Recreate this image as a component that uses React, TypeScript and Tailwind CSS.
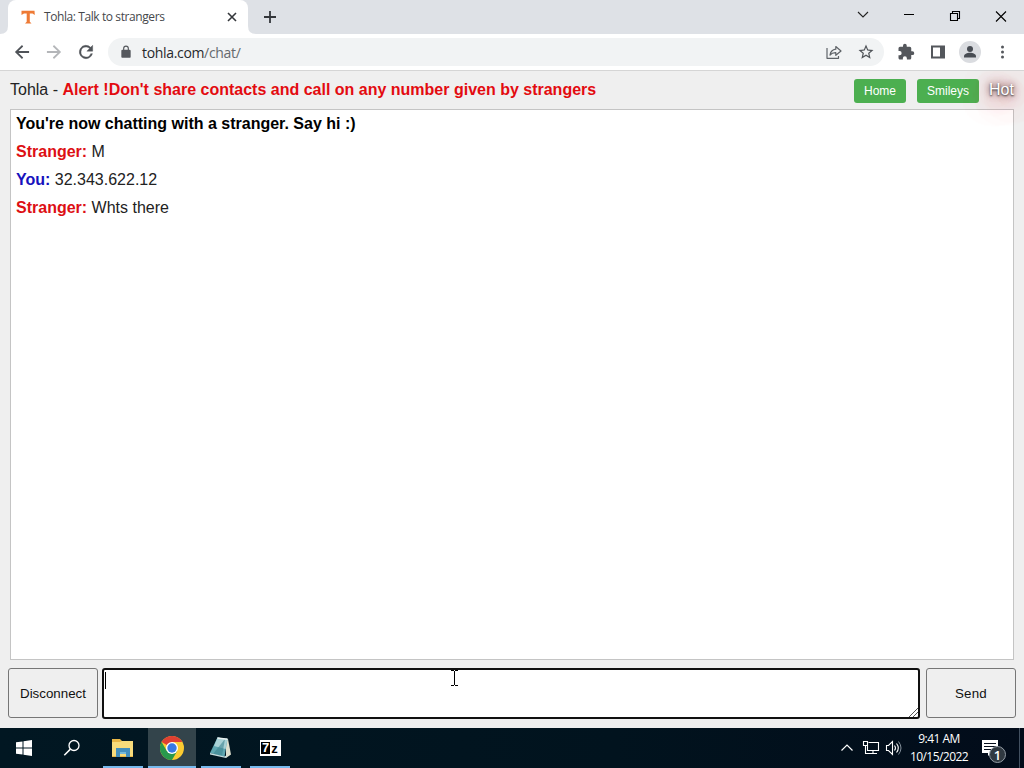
import type { ReactNode } from 'react';

const messages = [
  { from: 'Stranger', text: 'M' },
  { from: 'You', text: '32.343.622.12' },
  { from: 'Stranger', text: 'Whts there' },
];

function Icon({ size = 20, box = '0 0 24 24', children }: { size?: number; box?: string; children: ReactNode }) {
  return (
    <svg width={size} height={size} viewBox={box} fill="none" className="block shrink-0">
      {children}
    </svg>
  );
}

function TabStrip() {
  return (
    <div className="flex h-[34px] bg-[#dee1e6] font-['Open_Sans',sans-serif]">
      <svg width="8" height="34" className="shrink-0">
        <path d="M0 34Q8 34 8 26V34Z" fill="#fff" />
      </svg>
      <div className="flex h-[34px] w-[240px] shrink-0 items-center rounded-t-lg bg-white pl-3">
        <Icon size={16} box="0 0 16 16">
          <path d="M1.5 1.700h13l.3 4.300-2.300-1.600H9.800v8.300l1.700 1.800H5l1.700-1.800V4.400H4L1.500 6z" fill="#ee7a35" />
        </Icon>
        <span className="ml-2 w-[179px] whitespace-nowrap text-[12px] leading-4 tracking-[-0.41px] text-[#45484c]">
          Tohla: Talk to strangers
        </span>
        <Icon size={18} box="0 0 18 18">
          <path d="M5 5l8 8M13 5l-8 8" stroke="#34373b" strokeWidth="1.6" />
        </Icon>
      </div>
      <svg width="8" height="34" className="shrink-0">
        <path d="M8 34Q0 34 0 26V34Z" fill="#fff" />
      </svg>
      <div className="flex flex-1 items-center justify-between">
        <div className="ml-[6px]">
          <Icon size={16} box="0 0 16 16">
            <path d="M8 2v12M2 8h12" stroke="#34373b" strokeWidth="1.8" />
          </Icon>
        </div>
        <div className="flex h-7 items-center">
          <div className="flex w-[46px] justify-center">
            <Icon size={12} box="0 0 12 12">
              <path d="M1 1l5 5 5-5" stroke="#222" strokeWidth="1.1" />
            </Icon>
          </div>
          <div className="flex w-[46px] justify-center">
            <Icon size={12} box="0 0 12 12">
              <path d="M1 3.5h10" stroke="#000" />
            </Icon>
          </div>
          <div className="flex w-[46px] justify-center">
            <Icon size={12} box="0 0 12 12">
              <path d="M1.500 2.500h7v7h-7zM3.500 2.500v-2h7v7h-2" stroke="#000" strokeWidth="1.1" />
            </Icon>
          </div>
          <div className="flex w-[46px] justify-center">
            <Icon size={12} box="0 0 12 12">
              <path d="M1 .5l10 10M11 .5L1 10.500" stroke="#000" strokeWidth="1.1" />
            </Icon>
          </div>
        </div>
      </div>
    </div>
  );
}

function Toolbar() {
  return (
    <div className="flex h-9 items-center bg-white">
      <div className="ml-3 flex w-24 shrink-0 gap-3">
        <Icon>
          <path d="M20.500 10.800H7.830l5.590-5.390L12 3.700l-8.500 8.300 8.500 8.300 1.410-1.700L7.830 13.200H20.500z" fill="#4f5358" />
        </Icon>
        <Icon>
          <path d="M3.500 10.800h12.670l-5.590-5.390L12 3.700l8.500 8.300-8.500 8.300-1.410-1.700 5.580-5.400H3.500z" fill="#b4b6b9" />
        </Icon>
        <Icon>
          <path
            d="M17.65 6.35A8 8 0 1 0 19.73 14h-2.08A6 6 0 1 1 12 6c1.66 0 3.14.69 4.22 1.78L13 11h7V4z"
            fill="#4f5358"
            stroke="#4f5358"
            strokeWidth=".5"
          />
        </Icon>
      </div>
      <div className="flex h-7 w-[776px] shrink-0 items-center rounded-full bg-[#f1f3f4] pl-[11px] font-['Open_Sans',sans-serif] text-[14px] text-[#27292c]">
        <Icon size={14}>
          <path
            d="M18 8h-1V6A5 5 0 0 0 7 6v2H6a2 2 0 0 0-2 2v10c0 1.1.9 2 2 2h12a2 2 0 0 0 2-2V10a2 2 0 0 0-2-2zM9 8V6a3 3 0 0 1 6 0v2z"
            fill="#55585d"
          />
        </Icon>
        <span className="ml-[9px] flex-1 whitespace-nowrap tracking-[-0.33px]">
          tohla.com<span className="text-[#65696e]">/chat/</span>
        </span>
        <Icon size={16} box="0 0 16 16">
          <path
            d="M1 4v10.300h11.500V12M9.800 5.200V2.500L15 7l-5.200 4.300V8.600C7 8.500 5.400 9.300 4 11c.5-3.300 2.300-5.300 5.800-5.800z"
            stroke="#5f6368"
            strokeWidth="1.2"
            strokeLinejoin="round"
          />
        </Icon>
        <span className="ml-[15px] mr-[9px]">
          <Icon size={18}>
            <path
              d="M22 9.24l-7.19-.62L12 2 9.19 8.63 2 9.24l5.46 4.73L5.82 21 12 17.27 18.18 21l-1.63-7.03zM12 15.4l-3.76 2.27 1-4.28-3.32-2.88 4.38-.38L12 6.1l1.71 4.04 4.38.38-3.32 2.88 1 4.28z"
              fill="#4f5358"
            />
          </Icon>
        </span>
      </div>
      <div className="ml-[13px] flex items-center">
        <Icon size={18}>
          <path
            d="M20.500 11H19V7a2 2 0 0 0-2-2h-4V3.500a2.500 2.500 0 0 0-5 0V5H4a2 2 0 0 0-2 2v3.800h1.500a2.700 2.700 0 0 1 0 5.400H2V20c0 1.100.9 2 2 2h3.800v-1.500a2.700 2.700 0 0 1 5.400 0V22H17a2 2 0 0 0 2-2v-4h1.500a2.500 2.500 0 0 0 0-5z"
            fill="#54575c"
          />
        </Icon>
        <span className="ml-[15px]">
          <Icon size={16} box="0 0 16 16">
            <path d="M1 1.500h14v13H1zM3 3.500v9h7v-9z" fill="#54575c" fillRule="evenodd" />
          </Icon>
        </span>
        <span className="ml-[13px]">
          <Icon size={22} box="0 0 22 22">
            <circle cx="11" cy="11" r="11" fill="#dadce0" />
            <circle cx="11" cy="8" r="3" fill="#484c53" />
            <path d="M5 16.500v-1.200c0-2.300 3-3.500 6-3.500s6 1.200 6 3.500v1.200z" fill="#484c53" />
          </Icon>
        </span>
        <span className="ml-[13px]">
          <Icon size={16} box="0 0 16 16">
            <circle cx="8.500" cy="3" r="1.500" fill="#54575c" />
            <circle cx="8.500" cy="8" r="1.500" fill="#54575c" />
            <circle cx="8.500" cy="13" r="1.500" fill="#54575c" />
          </Icon>
        </span>
      </div>
    </div>
  );
}

function ChatPage() {
  return (
    <main className="relative flex h-[658px] flex-col overflow-hidden border-t border-[#d5d5d5] bg-[#efefef]">
      <header className="flex h-[38px] shrink-0 items-center pl-[10px]">
        <div className="flex-1 whitespace-nowrap text-[16px] text-[#222]">
          Tohla - <b className="text-[#e30b10]">Alert !Don't share contacts and call on any number given by strangers</b>
        </div>
        <button className="mt-[2px] h-6 w-[52px] rounded-[3px] bg-[#4caf50] text-[12px] text-white">Home</button>
        <button className="ml-[11px] mt-[2px] h-6 w-[62px] rounded-[3px] bg-[#4caf50] text-[12px] text-white">
          Smileys
        </button>
        <a className="relative z-10 ml-[10px] w-[35px] text-[16px] leading-5 text-white [text-shadow:0_1px_2px_#333,0_0_6px_#755,0_0_12px_#a77,0_4px_28px_#ff6268,0_5px_28px_#ff6268]">
          Hot
        </a>
      </header>
      <section className="mx-[10px] h-[551px] w-[1004px] shrink-0 border border-[#c4c4c4] bg-white pl-[5px] text-[16px] leading-7 text-[#222]">
        <p className="font-bold text-black">You're now chatting with a stranger. Say hi :)</p>
        {messages.map((m, i) => (
          <p key={i}>
            <b className={m.from === 'You' ? 'text-[#1711bd]' : 'text-[#dd0f14]'}>{m.from}:</b> {m.text}
          </p>
        ))}
      </section>
      <footer className="mt-2 flex h-[51px] pl-2 text-[13.333px] text-[#111]">
        <button className="h-[50px] w-[90px] rounded-[3px] border border-[#767676] bg-[#efefef] pt-[2px]">
          Disconnect
        </button>
        <div className="relative ml-1 h-[51px] w-[818px] rounded-[3px] border-2 border-[#101010] bg-white pl-[1px] pt-[2px]">
          <div className="h-[17px] w-px bg-black" />
          <svg width="9" height="17" className="absolute left-[346px] top-0" fill="none" shapeRendering="crispEdges">
            <path d="M1 .5h3M5 .5h3M4.500 1v14M1 15.500h3M5 15.500h3" stroke="#000" />
          </svg>
          <svg width="9" height="9" className="absolute bottom-0 right-0" fill="none">
            <path d="M0 9l9-9M4 9l5-5" stroke="#555" />
          </svg>
        </div>
        <button className="ml-[6px] h-[50px] w-[90px] rounded-[3px] border border-[#767676] bg-[#efefef] pt-[2px] tracking-[0.2px]">
          Send
        </button>
      </footer>
    </main>
  );
}

function Task({ active, children }: { active?: boolean; children: ReactNode }) {
  return (
    <div className={`flex h-10 w-12 flex-col items-center ${active ? 'bg-[#33444b]' : ''}`}>
      <div className="flex h-[38px] items-center pt-[2px]">{children}</div>
      <div className={active ? 'h-[2px] w-12 bg-[#76b9ed]' : 'h-[2px] w-10 bg-[#76b9ed]'} />
    </div>
  );
}

function Taskbar() {
  return (
    <div className="flex h-10 items-center bg-[linear-gradient(90deg,#011722,#01131e_60%,#020c1a)] font-['Open_Sans',sans-serif] text-white">
      <div className="flex w-12 justify-center">
        <Icon size={16} box="0 0 16 16">
          <path d="M0 2.300l6.500-.9v6.100H0zM7.500 1.300L16 0v7.500H7.500zM0 8.500h6.500v6.100L0 13.700zM7.500 8.500H16V16l-8.500-1.200z" fill="#fff" />
        </Icon>
      </div>
      <div className="flex w-[51px] justify-center pr-[3px]">
        <Icon size={18} box="0 0 18 18">
          <circle cx="11" cy="6.500" r="5" stroke="#fff" strokeWidth="1.300" />
          <path d="M7.400 10.100L1.300 16.200" stroke="#fff" strokeWidth="1.500" />
        </Icon>
      </div>
      <Task>
        <Icon size={24}>
          <path d="M1 3h8l2 2h11v16H1z" fill="#e9b746" />
          <path d="M1 6h8l2-1h11v15H1z" fill="#f8dc7b" />
          <path d="M5 12h14v9h-4v-5H9v5H5z" fill="#438fbd" />
          <path d="M9 16h6v2H9z" fill="#75b9d9" />
        </Icon>
      </Task>
      <span className="w-px" />
      <Task active>
        <Icon size={24}>
          <circle cx="12" cy="12" r="12" fill="#fbcb31" />
          <path d="M12 12L1.600 6A12 12 0 0 1 22.400 6H12z" fill="#df4032" />
          <path d="M1.600 6A12 12 0 0 0 12 24l5.200-9L12 12 6.800 15z" fill="#29984c" />
          <circle cx="12" cy="12" r="6" fill="#fff" />
          <circle cx="12" cy="12" r="4.700" fill="#3779e3" />
        </Icon>
      </Task>
      <span className="w-px" />
      <Task>
        <Icon size={24}>
          <path d="M17 2.500l2 .5 3 15.500-5 3.500z" fill="#dedfce" />
          <path d="M8.500 1.500l10 1.500-3 18L1 17z" fill="#5fa7b1" />
          <path d="M8.500 1.500l10 1.500-2 10L5 10z" fill="#a9d2d6" />
          <path d="M16 3l-3 17-9-2z" fill="#3d8490" opacity=".6" />
          <path d="M1 17l14.500 3.500 2.500-1.500-1 3L1 18.500z" fill="#c9dfe0" />
          <path d="M8.500 2l10 1.200" stroke="#e9f1f0" strokeWidth="1.400" />
        </Icon>
      </Task>
      <span className="w-px" />
      <Task>
        <div className="flex h-4 w-[21px] items-center justify-center bg-white font-['Liberation_Sans',sans-serif] text-[13px] font-bold leading-[12px]">
          <span className="flex h-3 w-[9px] items-center justify-center bg-black">7</span>
          <span className="w-[9px] pt-px text-center text-black">z</span>
        </div>
      </Task>
      <div className="ml-auto flex h-10 shrink-0 items-center">
        <Icon size={14} box="0 0 14 14">
          <path d="M1.500 9.500L7 4l5.500 5.500" stroke="#fff" strokeWidth="1.200" />
        </Icon>
        <span className="ml-2">
          <Icon size={18} box="0 0 18 18">
            <path
              d="M6.500 3.500h10v8h-11V7M11 11.500v3M7 14.500h8M1.500 2.500h4v4h-4zM3.500 6.500v8h3.500"
              stroke="#fff"
              strokeWidth="1.100"
            />
          </Icon>
        </span>
        <span className="ml-[5px]">
          <Icon size={18} box="0 0 18 18">
            <path d="M1.500 6.500h2l4-4v13l-4-4h-2zM9.500 6.500q2 2.500 0 5M11.500 4.500q3.600 4.500 0 9" stroke="#fff" strokeWidth="1.100" />
            <path d="M13.500 2.500q5 6.500 0 13" stroke="#85919b" />
          </Icon>
        </span>
        <div className="ml-[6px] w-[60px] whitespace-nowrap text-center text-[12px] leading-[18px] tracking-[-0.55px]">
          <p>9:41 AM</p>
          <p>10/15/2022</p>
        </div>
        <div className="relative ml-[12px] mr-[14px] h-6 w-6">
          <Icon size={24}>
            <path d="M1 4h16v13H10l-3 3v-3H1z" fill="#fff" />
            <path d="M3 7.500h12M3 10.500h12M3 13.500h7" stroke="#07101d" />
          </Icon>
          <span className="absolute left-[8px] top-[10px] flex h-[17px] w-[17px] items-center justify-center rounded-full border border-[#939ca5] bg-[#303941] text-[13px] font-semibold leading-4">
            1
          </span>
        </div>
        <div className="mr-1 h-10 w-px bg-[#425060]" />
      </div>
    </div>
  );
}

export default function App() {
  return (
    <div className="h-[768px] w-[1024px] overflow-hidden font-['Liberation_Sans',Arial,sans-serif]">
      <TabStrip />
      <Toolbar />
      <ChatPage />
      <Taskbar />
    </div>
  );
}
